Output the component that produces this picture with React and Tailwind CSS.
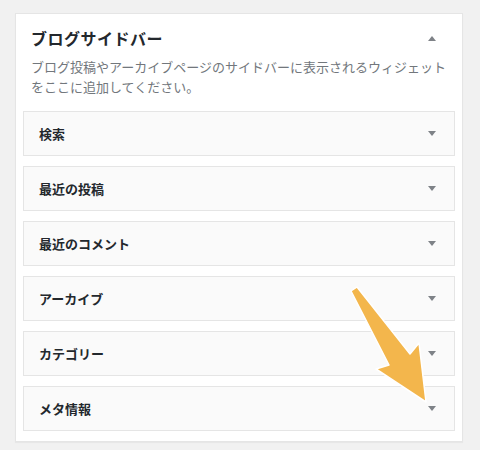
import React from 'react';

const widgets = ['検索', '最近の投稿', '最近のコメント', 'アーカイブ', 'カテゴリー', 'メタ情報'];

const Caret = ({ up = false }) => (
    <svg width="8" height="5" viewBox="0 0 8 5" className="shrink-0">
        <polygon points={up ? '4,0 8,5 0,5' : '0,0 8,0 4,5'} fill="#7e8287" />
    </svg>
);

const App = () => {
    return (
        <div
            className="relative w-[480px] h-[450px] overflow-hidden bg-[#f1f1f1] pt-[13px] pl-[15px]"
            style={{ fontFamily: '"Noto Sans CJK JP", "Noto Sans", sans-serif' }}
        >
            <div className="w-[448px] bg-white border border-[#e5e5e5] shadow-[0_1px_1px_rgba(0,0,0,0.04)] pb-[10px]">
                <div className="flex items-center justify-between pl-[15px] pr-[26px] pt-[12px]">
                    <h2 className="text-[16px] leading-[24px] font-bold tracking-[0.5px] text-[#23282d]">ブログサイドバー</h2>
                    <Caret up />
                </div>
                <p className="px-[15px] mt-[7px] text-[13px] leading-[19.5px] text-[#72777c]">
                    ブログ投稿やアーカイブページのサイドバーに表示されるウィジェットをここに追加してください。
                </p>
                <div className="mt-[15px] px-[7px] flex flex-col gap-[10px]">
                    {widgets.map((w) => (
                        <div
                            key={w}
                            className="h-[45px] flex items-center justify-between bg-[#fafafa] border border-[#e5e5e5] pl-[15px] pr-[18px]"
                        >
                            <span className="text-[13px] font-bold text-[#23282d]">{w}</span>
                            <Caret />
                        </div>
                    ))}
                </div>
            </div>

            <svg className="absolute left-0 top-0 pointer-events-none" width="480" height="450" viewBox="0 0 480 450">
                <polygon
                    points="351,291 357,287 410,354 419,343 426,402 376,369 389,365"
                    fill="#f3b64c"
                    stroke="#ffffff"
                    strokeWidth="1.5"
                    strokeLinejoin="round"
                />
            </svg>
        </div>
    );
};

export default App;
